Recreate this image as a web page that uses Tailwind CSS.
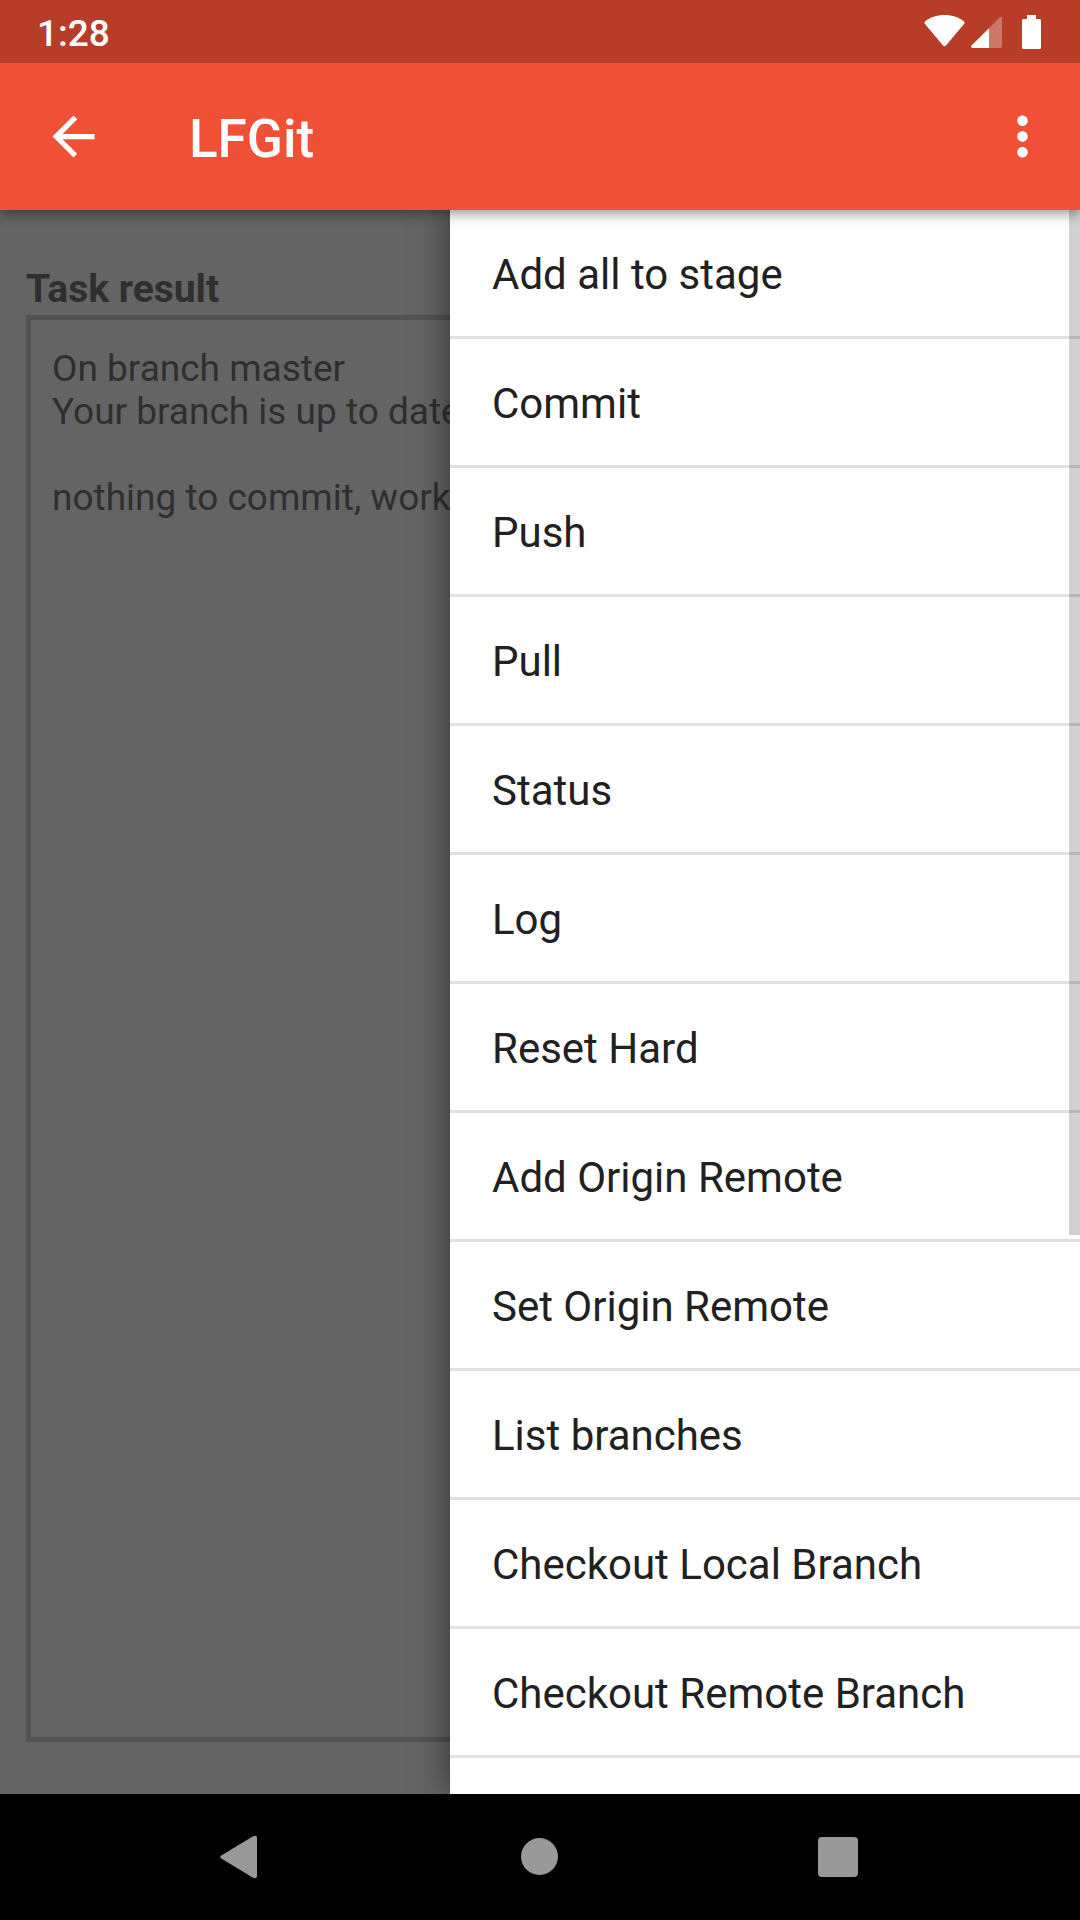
<!DOCTYPE html>
<html lang="en">
<head>
<meta charset="utf-8">
<meta name="viewport" content="width=device-width, initial-scale=1">
<title>LFGit</title>
<script src="https://cdn.jsdelivr.net/npm/@tailwindcss/browser@4"></script>
</head>
<body class="flex h-screen flex-col overflow-hidden bg-black font-[Roboto,sans-serif]">
  <!-- System status bar -->
  <div class="relative z-20 flex h-[63px] shrink-0 items-center justify-between bg-[#b73d28] pr-[39px] pl-[37px] text-white">
    <time class="pt-1 text-[37px] leading-[43px] font-medium">1:28</time>
    <div class="flex items-center">
      <svg class="h-[34px] w-[41px]" viewBox="0 0 41 34" fill="#fff" aria-label="Wi-Fi"><path d="M20.500 0C12.500 0 6 2.500 1.300 6.200Q-.2 7.500 1 9L19 30.500Q20.500 32 22 30.500L40 9Q41.200 7.500 39.700 6.200C35 2.500 28.500 0 20.500 0Z"/></svg>
      <svg class="ml-[6px] h-[34px] w-[31px]" viewBox="0 0 31 34" fill="#fff" aria-label="Signal"><path fill-opacity=".3" d="M18 13.200 28.400 2.600Q31 .8 31 3.700V31.500Q31 33 29.500 33H18Z"/><path d="M18 13.200V33H1.500Q-.8 32.500.5 30.500Z"/></svg>
      <svg class="ml-5 h-[34px] w-[19px]" viewBox="0 0 19 34" fill="#fff" aria-label="Battery"><path d="M5 0H14V4H17.500Q19 4 19 5.500V32.500Q19 34 17.500 34H1.500Q0 34 0 32.500V5.500Q0 4 1.500 4H5Z"/></svg>
    </div>
  </div>

  <!-- App bar -->
  <header class="relative z-10 flex h-[147px] shrink-0 items-center bg-[#f05136] pr-[26px] pl-[42px] text-white shadow-[0_4px_12px_rgba(0,0,0,0.4)]">
    <button type="button" aria-label="Back">
      <svg class="size-[63px]" viewBox="0 0 24 24" fill="currentColor"><path d="M20 11H7.830l5.590-5.590L12 4l-8 8 8 8 1.410-1.410L7.830 13H20v-2z"/></svg>
    </button>
    <h1 class="ml-[84px] flex-1 pt-1 text-[53px] leading-[62px] font-medium">LFGit</h1>
    <button type="button" aria-label="More options">
      <svg class="size-[63px]" viewBox="0 0 24 24" fill="currentColor"><path d="M12 8c1.100 0 2-.9 2-2s-.9-2-2-2-2 .9-2 2 .9 2 2 2zm0 2c-1.100 0-2 .9-2 2s.9 2 2 2 2-.9 2-2-.9-2-2-2zm0 6c-1.100 0-2 .9-2 2s.9 2 2 2 2-.9 2-2-.9-2-2-2z"/></svg>
    </button>
  </header>

  <main class="relative flex min-h-0 flex-1 flex-col overflow-hidden bg-[#fafafa]">
    <!-- Task output -->
    <section class="flex flex-1 flex-col px-[26px] pt-[58px] pb-[52px] text-[37px] leading-[43px] text-[#757575]">
      <label for="result" class="mb-1 text-[39px] font-bold">Task result</label>
      <textarea id="result" readonly class="w-full flex-1 resize-none overflow-hidden border-[5px] border-[#cdcdcd] px-[21px] py-[27px] whitespace-pre-wrap outline-none">On branch master
Your branch is up to date with 'origin/master'.

nothing to commit, working tree clean</textarea>
    </section>

    <div class="absolute inset-0 bg-black/60"></div>

    <!-- Git operations drawer -->
    <nav class="absolute inset-y-0 right-0 w-[630px] max-w-full overflow-hidden bg-white text-[42px] leading-[50px] text-[#212121] shadow-[0_0_32px_rgba(0,0,0,0.5)]">
      <ul class="divide-y-3 divide-[#e0e0e0] border-b-3 border-[#e0e0e0]">
        <li><button type="button" class="block h-[126px] w-full px-[42px] pt-1 text-left">Add all to stage</button></li>
        <li><button type="button" class="block h-[126px] w-full px-[42px] pt-1 text-left">Commit</button></li>
        <li><button type="button" class="block h-[126px] w-full px-[42px] pt-1 text-left">Push</button></li>
        <li><button type="button" class="block h-[126px] w-full px-[42px] pt-1 text-left">Pull</button></li>
        <li><button type="button" class="block h-[126px] w-full px-[42px] pt-1 text-left">Status</button></li>
        <li><button type="button" class="block h-[126px] w-full px-[42px] pt-1 text-left">Log</button></li>
        <li><button type="button" class="block h-[126px] w-full px-[42px] pt-1 text-left">Reset Hard</button></li>
        <li><button type="button" class="block h-[126px] w-full px-[42px] pt-1 text-left">Add Origin Remote</button></li>
        <li><button type="button" class="block h-[126px] w-full px-[42px] pt-1 text-left">Set Origin Remote</button></li>
        <li><button type="button" class="block h-[126px] w-full px-[42px] pt-1 text-left">List branches</button></li>
        <li><button type="button" class="block h-[126px] w-full px-[42px] pt-1 text-left">Checkout Local Branch</button></li>
        <li><button type="button" class="block h-[126px] w-full px-[42px] pt-1 text-left">Checkout Remote Branch</button></li>
      </ul>
      <div class="absolute top-0 right-0 h-[1025px] w-[11px] bg-black/18"></div>
    </nav>
  </main>

  <!-- System navigation bar -->
  <footer class="h-[126px] shrink-0 bg-black text-[#999999]">
    <div class="mx-auto grid h-full w-5/6 grid-cols-3 place-items-center">
      <button type="button" aria-label="Back"><svg class="size-12" viewBox="0 0 48 48" fill="currentColor"><path d="M5.300 22.400 36.600 3.400Q41 1.400 41 5V43Q41 46.600 36.600 44.600L5.300 25.600Q3 24 5.300 22.400Z"/></svg></button>
      <button type="button" aria-label="Home"><svg class="size-12" viewBox="0 0 48 48" fill="currentColor"><circle cx="23.500" cy="23.500" r="18.500"/></svg></button>
      <button type="button" aria-label="Recent apps"><svg class="size-12" viewBox="0 0 48 48" fill="currentColor"><rect x="2" y="4" width="40" height="40" rx="4"/></svg></button>
    </div>
  </footer>
</body>
</html>
